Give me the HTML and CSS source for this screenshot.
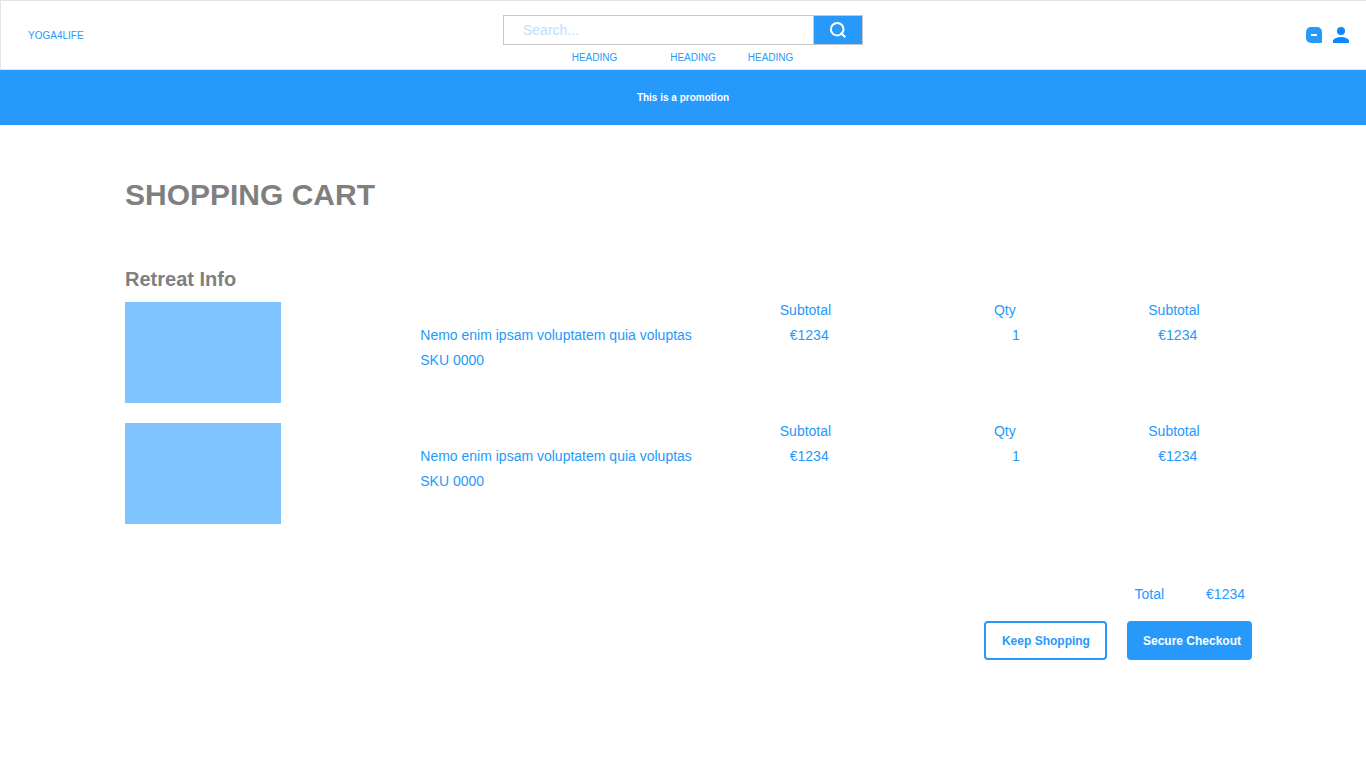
FILE: index.html
```html
<!DOCTYPE html>
<html lang="en">
<head>
<meta charset="utf-8">
<meta name="viewport" content="width=device-width, initial-scale=1">
<title>Shopping Cart</title>
<link rel="stylesheet" href="styles.css">
</head>
<body>
<header class="header">
  <a class="brand" href="#">YOGA4LIFE</a>
  <div class="header-center">
    <form class="search">
      <input class="search-input" type="search" placeholder="Search..." aria-label="Search">
      <button class="search-button" type="button" aria-label="Submit search">
        <svg width="18" height="18" viewBox="0 0 18 18" fill="none" stroke="#fff" stroke-width="2"><circle cx="8.200" cy="8.200" r="6.300"/><path d="M11.600 11.600l4.700 4.700"/></svg>
      </button>
    </form>
    <nav class="nav">
      <a class="nav-link nav-link-first" href="#">HEADING</a>
      <a class="nav-link" href="#">HEADING</a>
      <a class="nav-link" href="#">HEADING</a>
    </nav>
  </div>
  <div class="header-actions">
    <button class="icon-button" type="button" aria-label="Messages">
      <svg width="16" height="16" viewBox="0 0 16 16"><path fill="#2699fb" d="M5 0h6a5 5 0 0 1 5 5v9.500a1.500 1.500 0 0 1-1.500 1.500H5a5 5 0 0 1-5-5V5a5 5 0 0 1 5-5z"/><path fill="#fff" d="M5 7h6v2H5z"/></svg>
    </button>
    <button class="icon-button" type="button" aria-label="Account">
      <svg width="16" height="16" viewBox="0 0 16 16" fill="#0a8aff"><circle cx="8" cy="4" r="4"/><path d="M0 16v-2c0-2.700 5.300-4 8-4s8 1.300 8 4v2z"/></svg>
    </button>
  </div>
</header>
<p class="promo">This is a promotion</p>
<main class="cart">
  <h1 class="title">SHOPPING CART</h1>
  <h2 class="subtitle">Retreat Info</h2>
  <table class="items">
    <colgroup><col class="col-image"><col class="col-name"><col class="col-price"><col class="col-qty"><col class="col-total"></colgroup>
    <tbody>
      <tr>
        <td><div class="thumb"></div></td>
        <td class="description"><p class="line">Nemo enim ipsam voluptatem quia voluptas</p><p class="line">SKU 0000</p></td>
        <td><p class="line">Subtotal</p><p class="line amount">€1234</p></td>
        <td><p class="line">Qty</p><p class="line quantity">1</p></td>
        <td><p class="line">Subtotal</p><p class="line amount">€1234</p></td>
      </tr>
      <tr>
        <td><div class="thumb"></div></td>
        <td class="description"><p class="line">Nemo enim ipsam voluptatem quia voluptas</p><p class="line">SKU 0000</p></td>
        <td><p class="line">Subtotal</p><p class="line amount">€1234</p></td>
        <td><p class="line">Qty</p><p class="line quantity">1</p></td>
        <td><p class="line">Subtotal</p><p class="line amount">€1234</p></td>
      </tr>
    </tbody>
  </table>
  <div class="total"><span>Total</span><span>€1234</span></div>
  <div class="actions">
    <button class="button button-outline" type="button">Keep Shopping</button>
    <button class="button button-solid" type="button">Secure Checkout</button>
  </div>
</main>
</body>
</html>
```
FILE: styles.css
```css
* {
  box-sizing: border-box;
}

body {
  margin: 0;
  background: #fff;
  color: #2699fb;
  font: 14px/16px "Liberation Sans", Arial, sans-serif;
}

button {
  font-family: inherit;
  cursor: pointer;
}

.header {
  display: grid;
  grid-template-columns: 1fr 360px 1fr;
  align-items: center;
  height: 70px;
  padding: 0 17px 0 16px;
  border: 1px solid #e4e4e4;
  border-right: 0;
}

.brand,
.nav-link {
  color: #2699fb;
  font-size: 10px;
  line-height: 12px;
  text-decoration: none;
}

.brand {
  justify-self: start;
  padding: 1px 0 0 11px;
}

.header-center {
  align-self: start;
  padding-top: 14px;
}

.search {
  display: flex;
  height: 30px;
  border: 1px solid #c8c8c8;
}

.search-input {
  flex: 1;
  min-width: 0;
  padding: 0 19px;
  border: 0;
  background: #fff;
  color: #2699fb;
  font: 14px/16px "Liberation Sans", Arial, sans-serif;
}

.search-input::placeholder {
  color: #bce0fd;
}

.search-button {
  display: flex;
  align-items: center;
  justify-content: center;
  width: 49px;
  padding: 0;
  border: 0;
  border-left: 1px solid #c8c8c8;
  background: #2699fb;
}

.nav {
  display: flex;
  justify-content: center;
  gap: 32px;
  padding: 7px 1px 0 0;
}

.nav-link-first {
  margin-right: 21px;
}

.header-actions {
  display: flex;
  justify-content: flex-end;
  gap: 11px;
}

.icon-button {
  display: flex;
  padding: 0;
  border: 0;
  background: none;
}

.promo {
  margin: 0;
  padding: 20px;
  background: #2699fb;
  color: #fff;
  font-size: 10px;
  font-weight: bold;
  line-height: 15px;
  text-align: center;
}

.cart {
  padding: 50px 114px 40px 125px;
}

.title {
  margin: 0;
  color: #7f7f7f;
  font-size: 30px;
  line-height: 40px;
}

.subtitle {
  margin: 52px 0 11px;
  color: #7f7f7f;
  font-size: 20px;
  line-height: 24px;
}

.items {
  width: 100%;
  border-collapse: collapse;
  table-layout: fixed;
}

.items td {
  padding: 0 0 20px;
  vertical-align: top;
}

.col-image {
  width: 26.2%;
}

.col-name {
  width: 31.9%;
}

.col-price {
  width: 19%;
}

.col-qty {
  width: 13.7%;
}

.col-total {
  width: 9.2%;
}

.thumb {
  width: 156px;
  height: 101px;
  background: #7fc4ff;
}

.line {
  margin: 0 0 9px;
}

.items .description {
  padding-top: 25px;
}

.amount {
  padding-left: 10px;
}

.quantity {
  padding-left: 18px;
}

.total {
  display: flex;
  justify-content: flex-end;
  gap: 42px;
  padding: 42px 7px 19px 0;
}

.actions {
  display: flex;
  justify-content: flex-end;
  gap: 20px;
}

.button {
  height: 39px;
  border: 2px solid #2699fb;
  border-radius: 4px;
  font-size: 12px;
  font-weight: bold;
}

.button-outline {
  padding: 0 15px 0 16px;
  background: #fff;
  color: #2699fb;
}

.button-solid {
  padding: 0 9px 0 14px;
  background: #2699fb;
  color: #fff;
}
```
